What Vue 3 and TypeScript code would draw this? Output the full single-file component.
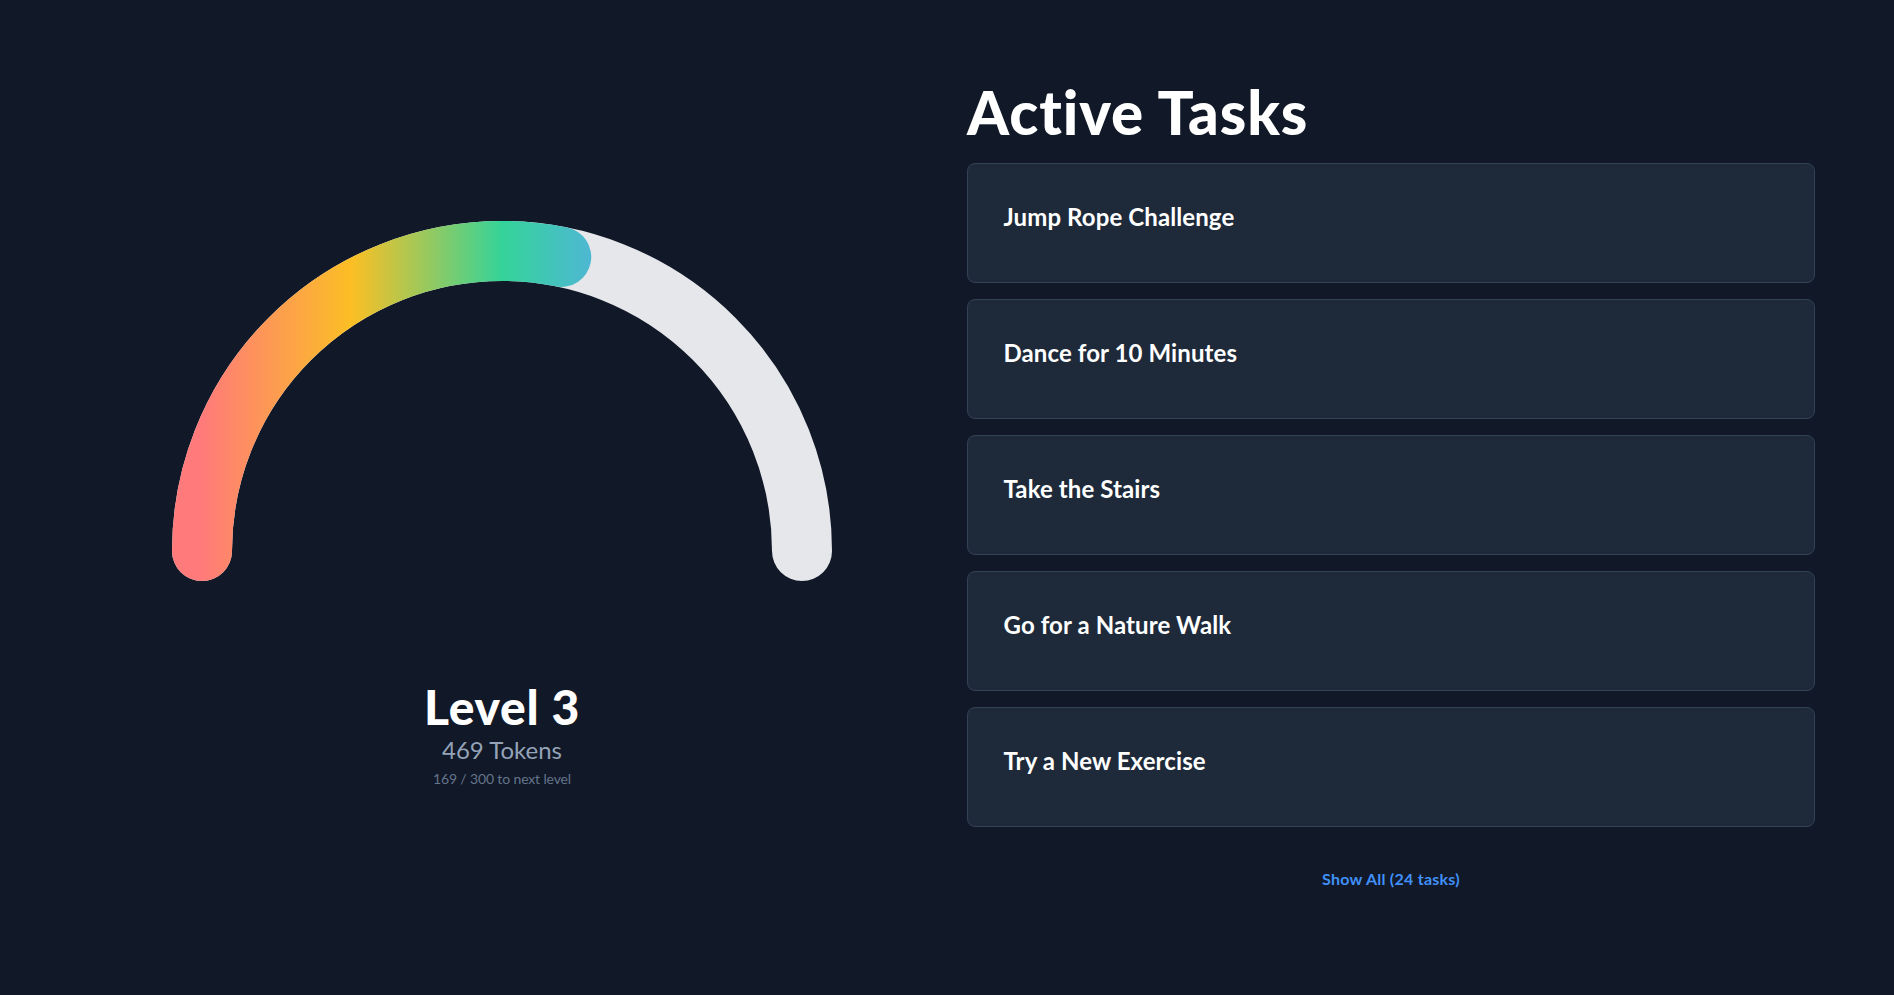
<script setup lang="ts">
const tasks: string[] = [
  'Jump Rope Challenge',
  'Dance for 10 Minutes',
  'Take the Stairs',
  'Go for a Nature Walk',
  'Try a New Exercise',
]
const arc = 'M 30 330 A 300 300 0 0 1 630 330'
const progress = 169 / 300
</script>

<template>
  <main class="page">
    <section class="level">
      <svg class="gauge" width="660" height="360" viewBox="0 0 660 360" role="img" aria-label="Level progress">
        <defs>
          <linearGradient id="gaugeFill" x1="0%" y1="0%" x2="100%" y2="0%">
            <stop offset="0%" stop-color="#ff7a7a" />
            <stop offset="25%" stop-color="#fbbf24" />
            <stop offset="50%" stop-color="#34d399" />
            <stop offset="75%" stop-color="#60a5fa" />
            <stop offset="100%" stop-color="#a78bfa" />
          </linearGradient>
        </defs>
        <path :d="arc" class="track" pathLength="1" />
        <path :d="arc" class="fill" pathLength="1" :stroke-dasharray="`${progress} 1`" />
      </svg>
      <h2 class="level-title">Level 3</h2>
      <p class="tokens">469 Tokens</p>
      <p class="next">169 / 300 to next level</p>
    </section>

    <section class="tasks">
      <h1 class="tasks-title">Active Tasks</h1>
      <ul class="task-list">
        <li v-for="task in tasks" :key="task" class="task">{{ task }}</li>
      </ul>
      <a class="show-all" href="#" @click.prevent>Show All (24 tasks)</a>
    </section>
  </main>
</template>

<style>
html,
body {
  margin: 0;
  background: #111827;
}
</style>

<style scoped>
.page {
  box-sizing: border-box;
  min-height: 995px;
  padding: 0 79px 0 78px;
  display: grid;
  grid-template-columns: 848px 848px;
  column-gap: 41px;
  background: #111827;
  color: #fff;
  font-family: Lato, "Noto Sans", sans-serif;
  font-variant-ligatures: none;
}
.level {
  display: flex;
  flex-direction: column;
  align-items: center;
  padding-top: 221px;
}
.gauge {
  display: block;
  margin-bottom: 102px;
}
.track,
.fill {
  fill: none;
  stroke-width: 60;
  stroke-linecap: round;
}
.track {
  stroke: #e5e7eb;
}
.fill {
  stroke: url(#gaugeFill);
}
.level-title {
  margin: 0;
  font-size: 48px;
  line-height: 48px;
  font-weight: 900;
  letter-spacing: 0.7px;
}
.tokens {
  margin: 3px 0 0;
  font-size: 24px;
  line-height: 32px;
  color: #94a3b8;
}
.next {
  margin: 3px 0 0;
  font-size: 14px;
  line-height: 20px;
  letter-spacing: -0.14px;
  color: #64748b;
}
.tasks {
  display: flex;
  flex-direction: column;
  padding-top: 79px;
}
.tasks-title {
  margin: 0 0 17px;
  font-size: 60px;
  line-height: 67px;
  font-weight: 900;
  letter-spacing: 0.9px;
}
.task-list {
  list-style: none;
  margin: 0;
  padding: 0;
  display: flex;
  flex-direction: column;
  gap: 16px;
}
.task {
  box-sizing: border-box;
  height: 120px;
  padding: 37px 35.5px 0;
  background: #1e2a3a;
  border: 1px solid #334155;
  border-radius: 8px;
  font-size: 24px;
  line-height: 32px;
  font-weight: 700;
  letter-spacing: 0.1px;
}
.show-all {
  align-self: center;
  margin-top: 40px;
  font-size: 16px;
  line-height: 24px;
  font-weight: 700;
  letter-spacing: 0.25px;
  color: #4090f8;
  text-decoration: none;
}
</style>
